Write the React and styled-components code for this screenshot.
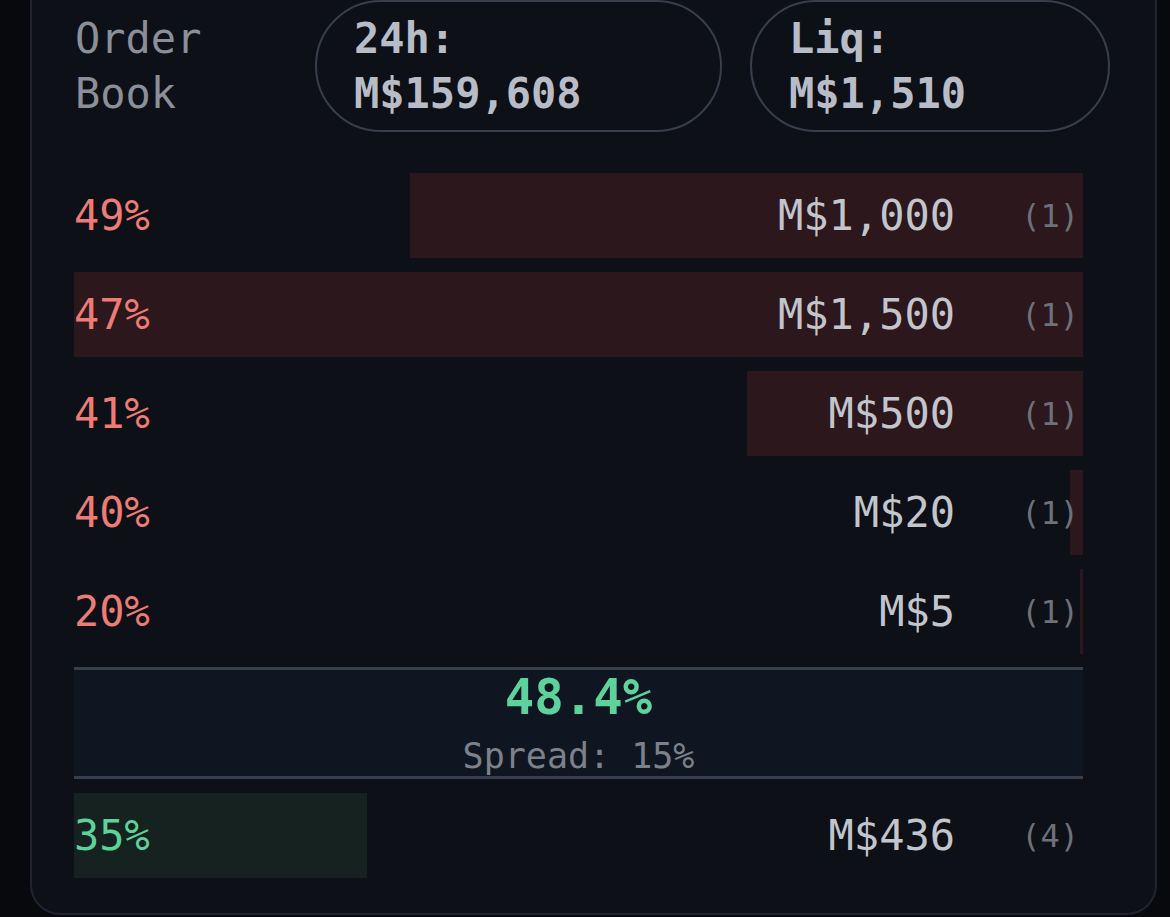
import React from "react";
import styled, { createGlobalStyle } from "styled-components";

const GlobalStyle = createGlobalStyle`
  html, body {
    margin: 0;
    padding: 0;
    background: #08090c;
    min-height: 100%;
  }
  body {
    font-family: "DejaVu Sans Mono", "Liberation Mono", monospace;
  }
`;

const Page = styled.div`
  padding-left: 30px;
  min-height: 917px;
  box-sizing: border-box;
`;

const Card = styled.section`
  box-sizing: border-box;
  width: 1127px;
  background: #0d1017;
  border: 2px solid #20242f;
  border-top: none;
  border-radius: 0 0 30px 30px;
  padding: 0 72px 35px 42px;
  display: flex;
  flex-direction: column;
`;

const Header = styled.header`
  display: flex;
  align-items: center;
  gap: 28px;
  margin-right: -27px;
`;

const Title = styled.h2`
  margin: 0;
  width: 212px;
  padding-left: 1px;
  font-size: 42px;
  line-height: 55px;
  font-weight: 400;
  color: #8a8f99;
`;

const Pill = styled.div`
  box-sizing: border-box;
  width: ${(p) => p.$w}px;
  border: 2px solid #383e4b;
  border-radius: 70px;
  padding: 9px 37px;
  font-size: 42px;
  line-height: 55px;
  font-weight: 700;
  color: #b8bcc6;
  white-space: pre-line;
`;

const Rows = styled.div`
  display: flex;
  flex-direction: column;
  gap: 14px;
  margin-top: 41px;
`;

const Row = styled.div`
  position: relative;
  height: 85px;
  display: grid;
  grid-template-columns: 1fr auto 128px;
  align-items: center;
`;

const Bar = styled.div`
  position: absolute;
  top: 0;
  bottom: 0;
  ${(p) => (p.$side === "right" ? "right: 0;" : "left: 0;")}
  background: ${(p) => (p.$side === "right" ? "#2c171c" : "#15221f")};
`;

const Prob = styled.span`
  position: relative;
  font-size: 42px;
  color: ${(p) => (p.$up ? "#5dd29b" : "#ec7c75")};
`;

const Amount = styled.span`
  position: relative;
  font-size: 42px;
  color: #c2c5cc;
  text-align: right;
`;

const Count = styled.span`
  position: relative;
  font-size: 32px;
  color: #6c717b;
  text-align: right;
  padding-right: 4px;
`;

const Divider = styled.div`
  margin-top: 13px;
  background: #101522;
  border-top: 3px solid #393e4c;
  border-bottom: 3px solid #393e4c;
  display: flex;
  flex-direction: column;
  align-items: center;
`;

const Mid = styled.div`
  font-size: 49px;
  line-height: 56px;
  font-weight: 700;
  color: #5dd29b;
`;

const Spread = styled.div`
  margin-top: 10px;
  font-size: 35px;
  line-height: 40px;
  color: #7c818b;
`;

const BuyRows = styled.div`
  margin-top: 14px;
  display: flex;
  flex-direction: column;
`;

const MAX = 1500;

const sells = [
  { p: "49%", amt: 1000, n: 1 },
  { p: "47%", amt: 1500, n: 1 },
  { p: "41%", amt: 500, n: 1 },
  { p: "40%", amt: 20, n: 1 },
  { p: "20%", amt: 5, n: 1 },
];

const buys = [{ p: "35%", amt: 436, n: 4 }];

const fmt = (v) => "M$" + v.toLocaleString("en-US");

const OrderRow = ({ p, amt, n, up }) => (
  <Row>
    <Bar $side={up ? "left" : "right"} style={{ width: `${(amt / MAX) * 100}%` }} />
    <Prob $up={up}>{p}</Prob>
    <Amount>{fmt(amt)}</Amount>
    <Count>({n})</Count>
  </Row>
);

export default function App() {
  return (
    <>
      <GlobalStyle />
      <Page>
        <Card>
          <Header>
            <Title>Order Book</Title>
            <Pill $w={407}>{"24h:\nM$159,608"}</Pill>
            <Pill $w={360}>{"Liq:\nM$1,510"}</Pill>
          </Header>
          <Rows>
            {sells.map((r) => (
              <OrderRow key={r.p} {...r} />
            ))}
          </Rows>
          <Divider>
            <Mid>48.4%</Mid>
            <Spread>Spread: 15%</Spread>
          </Divider>
          <BuyRows>
            {buys.map((r) => (
              <OrderRow key={r.p} {...r} up />
            ))}
          </BuyRows>
        </Card>
      </Page>
    </>
  );
}
